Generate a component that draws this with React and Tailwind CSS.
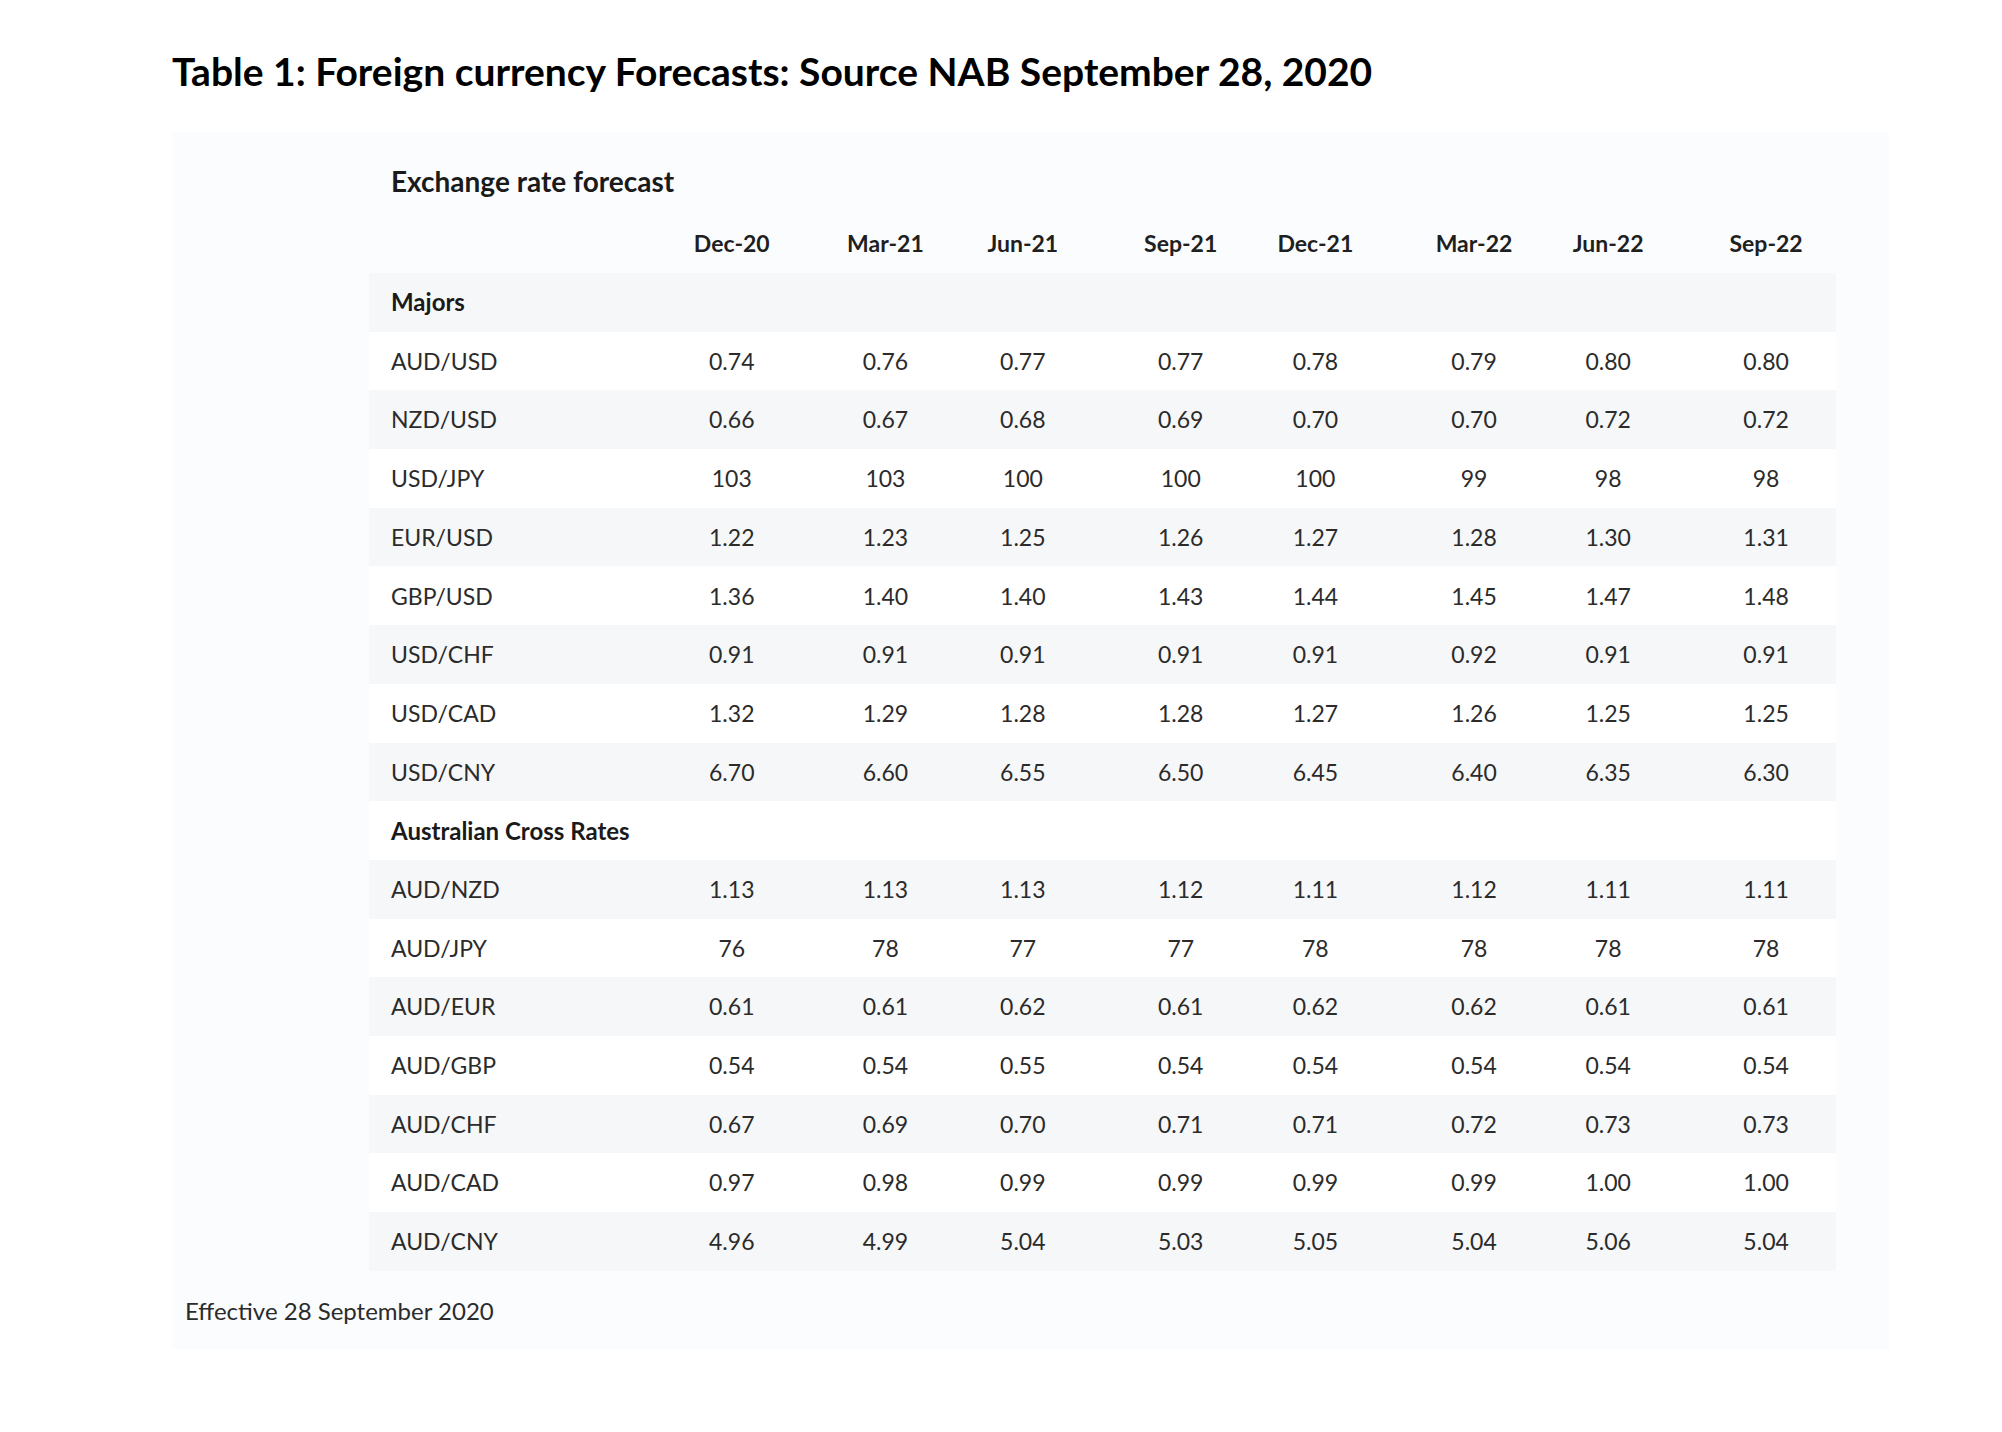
import React from "react";

const cols = ["Dec-20", "Mar-21", "Jun-21", "Sep-21", "Dec-21", "Mar-22", "Jun-22", "Sep-22"];

// per column nudges so the centred figures sit where the reference has them
const colCls = [
  "w-[154px]",
  "w-[145.5px] pl-[8px]",
  "w-[147.5px] pr-[10px]",
  "w-[146.5px] pl-[12px]",
  "w-[147px] pr-[12px]",
  "w-[146.5px] pl-[12px]",
  "w-[146px] pr-[12px]",
  "w-[149px] pl-[9px]",
];

const sections = [
  {
    title: "Majors",
    rows: [
      ["AUD/USD", "0.74", "0.76", "0.77", "0.77", "0.78", "0.79", "0.80", "0.80"],
      ["NZD/USD", "0.66", "0.67", "0.68", "0.69", "0.70", "0.70", "0.72", "0.72"],
      ["USD/JPY", "103", "103", "100", "100", "100", "99", "98", "98"],
      ["EUR/USD", "1.22", "1.23", "1.25", "1.26", "1.27", "1.28", "1.30", "1.31"],
      ["GBP/USD", "1.36", "1.40", "1.40", "1.43", "1.44", "1.45", "1.47", "1.48"],
      ["USD/CHF", "0.91", "0.91", "0.91", "0.91", "0.91", "0.92", "0.91", "0.91"],
      ["USD/CAD", "1.32", "1.29", "1.28", "1.28", "1.27", "1.26", "1.25", "1.25"],
      ["USD/CNY", "6.70", "6.60", "6.55", "6.50", "6.45", "6.40", "6.35", "6.30"],
    ],
  },
  {
    title: "Australian Cross Rates",
    rows: [
      ["AUD/NZD", "1.13", "1.13", "1.13", "1.12", "1.11", "1.12", "1.11", "1.11"],
      ["AUD/JPY", "76", "78", "77", "77", "78", "78", "78", "78"],
      ["AUD/EUR", "0.61", "0.61", "0.62", "0.61", "0.62", "0.62", "0.61", "0.61"],
      ["AUD/GBP", "0.54", "0.54", "0.55", "0.54", "0.54", "0.54", "0.54", "0.54"],
      ["AUD/CHF", "0.67", "0.69", "0.70", "0.71", "0.71", "0.72", "0.73", "0.73"],
      ["AUD/CAD", "0.97", "0.98", "0.99", "0.99", "0.99", "0.99", "1.00", "1.00"],
      ["AUD/CNY", "4.96", "4.99", "5.04", "5.03", "5.05", "5.04", "5.06", "5.04"],
    ],
  },
];

function buildRows() {
  const out = [];
  sections.forEach((s) => {
    out.push({ head: true, label: s.title });
    s.rows.forEach((r) => out.push({ head: false, label: r[0], vals: r.slice(1) }));
  });
  return out;
}

export default function App() {
  const rows = buildRows();
  return (
    <div className="min-h-screen w-[2002px] bg-white font-['Lato',sans-serif]">
      <h1 className="pl-[172px] pt-[45px] text-[39px] font-bold leading-[52px] text-black">
        Table 1: Foreign currency Forecasts: Source NAB September 28, 2020
      </h1>

      <div className="ml-[172px] mt-[35px] w-[1717px] bg-[#fbfcfd] pb-[20px]">
        <div className="ml-[197px] w-[1467px] text-[#2b2b2b]">
          <div className="flex h-[82px] items-end pb-[12px] pl-[22px] text-[28px] font-bold text-[#1a1a1a]">
            Exchange rate forecast
          </div>

          {/* column headings */}
          <div className="flex h-[59px] items-center text-[23px] font-bold text-[#1f1f1f]">
            <div className="w-[286px]" />
            {cols.map((c, i) => (
              <div key={c} className={`${colCls[i]} text-center`}>
                {c}
              </div>
            ))}
          </div>

          {rows.map((r, i) => (
            <div
              key={r.label}
              className={`flex h-[58.7px] items-center text-[23px] ${i % 2 === 0 ? "bg-[#f6f7f8]" : "bg-white"}`}
            >
              <div className={`w-[286px] pl-[22px] ${r.head ? "text-[24px] font-bold text-[#1a1a1a]" : ""}`}>
                {r.label}
              </div>
              {!r.head &&
                r.vals.map((v, j) => (
                  <div key={j} className={`${colCls[j]} text-center`}>
                    {v}
                  </div>
                ))}
            </div>
          ))}
        </div>

        <div className="mt-[22px] pl-[13px] text-[24px] leading-[36px] text-[#2b2b2b]">
          Effective 28 September 2020
        </div>
      </div>
    </div>
  );
}
